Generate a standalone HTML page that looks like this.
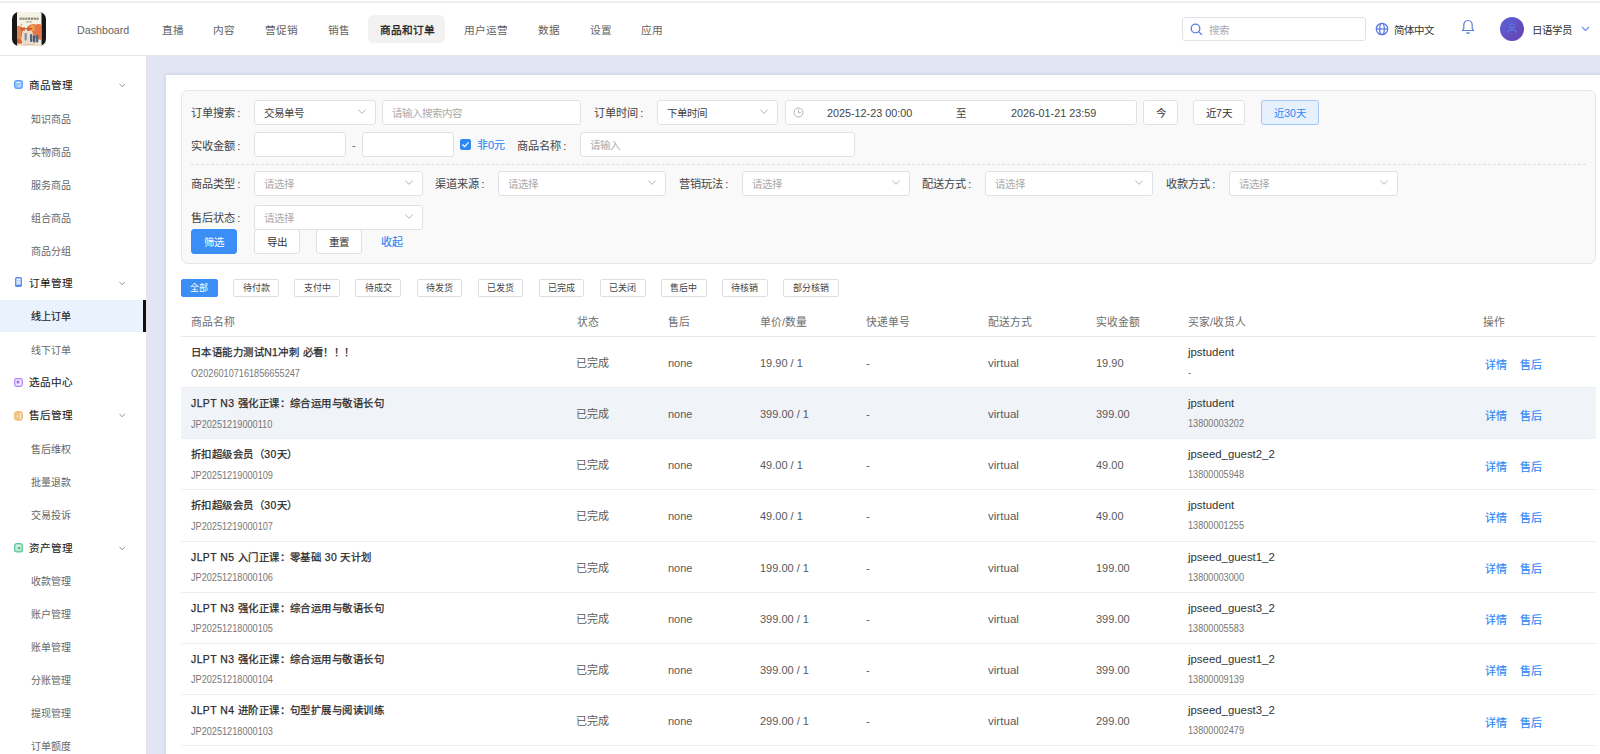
<!DOCTYPE html><html lang="zh-CN"><head><meta charset="utf-8"><style>
*{margin:0;padding:0;box-sizing:border-box}
html,body{width:1600px;height:754px;overflow:hidden;background:#fff;font-family:"Liberation Sans",sans-serif;color:#333}
.abs{position:absolute;white-space:nowrap}
.t{position:absolute;white-space:nowrap;line-height:1}
#hdr{position:absolute;left:0;top:0;width:1600px;height:56px;background:#fff;border-bottom:1px solid #e6e6e6}
#topline{position:absolute;left:0;top:1px;width:1600px;height:2px;background:#eeeeee}
.nav{position:absolute;top:23.8px;font-size:10.7px;color:#636363;line-height:12px}
#side{position:absolute;left:0;top:56px;width:147px;height:698px;background:#fff;border-right:1px solid #e4e4e8}
#main{position:absolute;left:147px;top:56px;width:1453px;height:698px;background:#e2e5f3}
#card{position:absolute;left:166px;top:75px;width:1440px;height:700px;background:#fff;box-shadow:0 0 4px rgba(120,125,160,.25)}
.gh{position:absolute;left:29px;font-size:10.6px;font-weight:500;color:#222;line-height:12px;-webkit-text-stroke:.12px #222}
.si{position:absolute;left:31px;font-size:10px;color:#666;line-height:12px}
.ico{position:absolute;left:14px;width:9px;height:9px;border-radius:2px}
.chev{position:absolute;left:119px;width:7px;height:7px}
#filter{position:absolute;left:181px;top:90px;width:1415px;height:174px;background:#f9f9f9;border:1px solid #e6e6e6;border-radius:7px}
.lbl{position:absolute;font-size:11.2px;color:#444;line-height:12px;margin-top:.7px}
.inp{position:absolute;height:25px;background:#fff;border:1px solid #dfe1e7;border-radius:3px}
.ph{position:absolute;font-size:10.5px;color:#aaa;line-height:12px;top:6px}
.val{position:absolute;font-size:10.5px;color:#444;line-height:12px;top:6px}
.btn{position:absolute;height:25px;padding-top:1px;background:#fff;border:1px solid #dfe1e7;border-radius:3px;font-size:10.5px;color:#333;text-align:center;line-height:23px}
.tab{position:absolute;top:278.7px;height:18px;background:#fff;border:1px solid #dcdee3;border-radius:2px;font-size:9px;color:#444;text-align:center;line-height:17px}
.th{position:absolute;top:315.8px;font-size:10.8px;color:#6e6e6e;line-height:12px;font-weight:500}
.row{position:absolute;left:181px;width:1415px;border-bottom:1px solid #eceef3}
.ttl{position:absolute;left:10px;font-size:10.4px;letter-spacing:.45px;font-weight:500;color:#2a2a2a;-webkit-text-stroke:.25px #2a2a2a;line-height:12px}
.ono{position:absolute;left:10px;font-size:10px;color:#777;line-height:12px;transform:scaleX(.915);transform-origin:0 0}
.cell{position:absolute;font-size:11px;color:#5a5a5a;line-height:12px}
.lnk{position:absolute;font-size:11px;color:#2f86f6;line-height:12px;font-weight:500;-webkit-text-stroke:.15px #2f86f6}
</style></head><body>
<div id="hdr"></div><div id="topline"></div>
<svg class="abs" style="left:12px;top:12px" width="34" height="34" viewBox="0 0 34 34">
<defs><clipPath id="lc"><rect x="0" y="0" width="34" height="34" rx="7"/></clipPath>
<linearGradient id="lg1" x1="0" y1="0" x2="0" y2="1"><stop offset="0" stop-color="#f4f3e6"/><stop offset="1" stop-color="#f1efe0"/></linearGradient></defs>
<g clip-path="url(#lc)">
<rect width="34" height="34" fill="#171717"/>
<rect x="5" y="0" width="24.5" height="34" fill="url(#lg1)"/>
<g fill="#6f6257" opacity=".75"><rect x="7.6" y="5.6" width="2.2" height="2.2"/><rect x="10.4" y="5.6" width="2.2" height="2.2"/><rect x="13.2" y="5.6" width="2.2" height="2.2"/><rect x="16" y="5.6" width="2.2" height="2.2"/><rect x="18.8" y="5.6" width="2.2" height="2.2"/><rect x="21.6" y="5.6" width="2.2" height="2.2"/><rect x="24.4" y="5.6" width="2.2" height="2.2"/></g>
<rect x="14.5" y="9.2" width="2" height="1.3" fill="#7d7065" opacity=".7"/><rect x="17.5" y="9.2" width="2" height="1.3" fill="#7d7065" opacity=".7"/>
<circle cx="9.5" cy="12.5" r=".8" fill="#e07050" opacity=".8"/>
<path d="M5 14.5 Q7 13 9 14.5 Q11 16 13 15 L13 34 L5 34 Z" fill="#e37a44" opacity=".9"/>
<path d="M15 15 Q19 11 24 12.5 Q27.5 11.5 29.5 13 L29.5 28 Q24 27 19 24 L15 20 Z" fill="#e36a3c" opacity=".92"/>
<path d="M18 13.5 Q21 12 23 14 L23 19 L18 19 Z" fill="#eea24e" opacity=".85"/>
<rect x="8" y="16.2" width="12" height="1.2" fill="#b9442c" opacity=".85"/>
<rect x="9.5" y="17.4" width="1.1" height="10" fill="#b9442c" opacity=".75"/>
<path d="M10.5 19 L20 19 L25 34 L8 34 Z" fill="#eadccb"/>
<rect x="12.5" y="21" width="2.4" height="7.5" rx="1" fill="#8a93a0"/>
<rect x="18" y="22" width="2.4" height="8" rx="1" fill="#56627a"/>
<rect x="21" y="23.5" width="2.4" height="7" rx="1" fill="#4e5a73"/>
<rect x="24" y="23" width="2.4" height="7.5" rx="1" fill="#56627c"/>
<path d="M5 27 Q8 26 10 29 L10 34 L5 34 Z" fill="#d8582f" opacity=".85"/>
<rect x="5" y="31.6" width="24.5" height="2.4" fill="#eee2cf"/>
<rect x="11" y="32.2" width="12" height=".8" fill="#c9a98a" opacity=".6"/>
</g></svg>
<div class="abs" style="left:368px;top:15px;width:77px;height:28px;background:#f2f2f2;border-radius:6px"></div>
<div class="nav" style="left:77px;">Dashboard</div>
<div class="nav" style="left:162px;">直播</div>
<div class="nav" style="left:213px;">内容</div>
<div class="nav" style="left:265px;">营促销</div>
<div class="nav" style="left:328px;">销售</div>
<div class="nav" style="left:380px;color:#222;font-weight:500;-webkit-text-stroke:.3px #222;">商品和订单</div>
<div class="nav" style="left:464px;">用户运营</div>
<div class="nav" style="left:538px;">数据</div>
<div class="nav" style="left:590px;">设置</div>
<div class="nav" style="left:641px;">应用</div>
<div class="abs" style="left:1182px;top:17px;width:184px;height:24px;border:1px solid #e0e2e9;border-radius:3px;background:#fff"></div>
<svg class="abs" style="left:1190px;top:23px" width="13" height="13" viewBox="0 0 13 13"><circle cx="5.5" cy="5.5" r="4.3" fill="none" stroke="#5d7de6" stroke-width="1.3"/><line x1="8.6" y1="8.6" x2="11.5" y2="11.5" stroke="#5d7de6" stroke-width="1.3" stroke-linecap="round"/></svg>
<div class="t" style="left:1209px;top:24.7px;font-size:10.5px;color:#aaa">搜索</div>
<svg class="abs" style="left:1374.5px;top:22px" width="14" height="14" viewBox="0 0 14 14"><g fill="none" stroke="#5a78e6" stroke-width="1.25"><circle cx="7" cy="7" r="5.7"/><ellipse cx="7" cy="7" rx="2.3" ry="5.7"/><line x1="1.3" y1="7" x2="12.7" y2="7"/></g></svg>
<div class="t" style="left:1393.5px;top:24.8px;font-size:10.5px;color:#333">简体中文</div>
<svg class="abs" style="left:1461px;top:19px" width="14" height="16" viewBox="0 0 14 16"><path d="M7 1.5 C4.2 1.5 2.8 3.6 2.8 6 L2.8 9.5 L1.5 11.5 L12.5 11.5 L11.2 9.5 L11.2 6 C11.2 3.6 9.8 1.5 7 1.5 Z" fill="none" stroke="#5b7fd8" stroke-width="1.2" stroke-linejoin="round"/><path d="M5.5 13.5 Q7 15 8.5 13.5" fill="none" stroke="#5b7fd8" stroke-width="1.2"/></svg>
<div class="abs" style="left:1500px;top:17px;width:24px;height:24px;border-radius:50%;background:linear-gradient(135deg,#5865d8,#6a3fae)"></div>
<svg class="abs" style="left:1505px;top:22px" width="14" height="14" viewBox="0 0 14 14"><g fill="none" stroke="#5d7ae8" stroke-width="1.1"><circle cx="7" cy="3.8" r="2.1"/><path d="M2.8 10.8 Q2.8 7.6 7 7.6 Q11.2 7.6 11.2 10.8"/></g></svg>
<div class="t" style="left:1531.5px;top:24.8px;font-size:10.5px;color:#333">日语学员</div>
<svg class="abs" style="left:1581px;top:26px" width="9" height="6" viewBox="0 0 9 6"><path d="M1 1 L4.5 4.5 L8 1" fill="none" stroke="#6b8cf0" stroke-width="1.2"/></svg>
<div id="side"></div><div id="main"></div><div id="card"></div>
<div class="abs" style="left:0;top:300px;width:143px;height:32px;background:#eaf2fd"></div>
<div class="abs" style="left:143px;top:300px;width:3px;height:32px;background:#111"></div>
<div class="abs" style="left:14px;top:80px;line-height:0"><svg width="9" height="9" viewBox="0 0 9 9"><rect x=".6" y=".6" width="7.8" height="7.8" rx="2.2" fill="#8fc0fa" stroke="#5ea2f6" stroke-width="1.1"/><rect x="2.2" y="2.1" width="4.6" height="1" fill="#e8f2fe"/><path d="M2.3 6.6 L6.6 6.6 L6.6 4.5 Z" fill="#e8f2fe" opacity=".85"/></svg></div>
<div class="gh" style="top:79px">商品管理</div>
<svg class="chev" style="top:81.7px" width="8" height="5" viewBox="0 0 8 5"><path d="M.5 .6 L3.6 4 L6.7 .6" fill="none" stroke="#8c8c8c" stroke-width="1.05"/></svg>
<div class="si" style="top:113.5px">知识商品</div>
<div class="si" style="top:146.5px">实物商品</div>
<div class="si" style="top:179.5px">服务商品</div>
<div class="si" style="top:212.5px">组合商品</div>
<div class="si" style="top:245.5px">商品分组</div>
<div class="abs" style="left:14.5px;top:277px;line-height:0"><svg width="7" height="10" viewBox="0 0 7 10"><rect x=".6" y=".6" width="5.8" height="8.6" rx="1.2" fill="#b9d0fb" stroke="#5688f1" stroke-width="1.1"/><rect x="1.8" y="2" width="3.4" height="1" fill="#f3f7fe"/><rect x="1.8" y="4.2" width="3.4" height="2.4" fill="#eef3fe" opacity=".8"/><rect x=".3" y="8" width="6.4" height="1.4" fill="#4d82f0"/></svg></div>
<div class="gh" style="top:277px">订单管理</div>
<svg class="chev" style="top:279.7px" width="8" height="5" viewBox="0 0 8 5"><path d="M.5 .6 L3.6 4 L6.7 .6" fill="none" stroke="#8c8c8c" stroke-width="1.05"/></svg>
<div class="si" style="top:311px;color:#222;font-weight:500;-webkit-text-stroke:.2px #222">线上订单</div>
<div class="si" style="top:344.5px">线下订单</div>
<div class="abs" style="left:14px;top:377.5px;line-height:0"><svg width="9" height="9" viewBox="0 0 9 9"><rect x=".7" y=".7" width="7.6" height="7.6" rx="1.8" fill="#f1e6fe" stroke="#b282f6" stroke-width="1.2"/><circle cx="4" cy="4.1" r="1.5" fill="#a06af5"/></svg></div>
<div class="gh" style="top:376px">选品中心</div>
<div class="abs" style="left:14px;top:410.5px;line-height:0"><svg width="9" height="10" viewBox="0 0 9 10"><rect x=".6" y=".6" width="7.8" height="8.6" rx="2.2" fill="#f2c585" stroke="#f0bb72" stroke-width="1"/><path d="M2 5 Q3.5 4 5 5 Q3.5 6 2 5 Z" fill="#fdf3e4"/><rect x="6" y="2.4" width="1" height="5.4" fill="#fdf3e4"/></svg></div>
<div class="gh" style="top:409px">售后管理</div>
<svg class="chev" style="top:411.7px" width="8" height="5" viewBox="0 0 8 5"><path d="M.5 .6 L3.6 4 L6.7 .6" fill="none" stroke="#8c8c8c" stroke-width="1.05"/></svg>
<div class="si" style="top:443.8px">售后维权</div>
<div class="si" style="top:476.8px">批量退款</div>
<div class="si" style="top:509.8px">交易投诉</div>
<div class="abs" style="left:14px;top:543px;line-height:0"><svg width="9" height="10" viewBox="0 0 9 10"><rect x=".7" y=".7" width="7.6" height="8.2" rx="2" fill="#bfead5" stroke="#59c79a" stroke-width="1.2"/><rect x="2" y="2.3" width="5" height=".9" fill="#e6f7ef"/><circle cx="5.2" cy="5.2" r="1.1" fill="#2fb57e"/></svg></div>
<div class="gh" style="top:542px">资产管理</div>
<svg class="chev" style="top:544.7px" width="8" height="5" viewBox="0 0 8 5"><path d="M.5 .6 L3.6 4 L6.7 .6" fill="none" stroke="#8c8c8c" stroke-width="1.05"/></svg>
<div class="si" style="top:575.8px">收款管理</div>
<div class="si" style="top:608.8px">账户管理</div>
<div class="si" style="top:641.8px">账单管理</div>
<div class="si" style="top:674.8px">分账管理</div>
<div class="si" style="top:707.8px">提现管理</div>
<div class="si" style="top:740.8px">订单额度</div>
<div id="filter"></div>
<div class="lbl" style="left:191px;top:106px">订单搜索<span style="margin-left:2.3px">:</span></div>
<div class="inp" style="left:254px;top:100px;width:122px"></div>
<div class="val" style="left:263.5px;top:107px;color:#444">交易单号</div>
<svg class="abs" style="left:357.5px;top:108.7px" width="8" height="5" viewBox="0 0 8 5"><path d="M.3 .5 L4 4.3 L7.7 .5" fill="none" stroke="#aaa" stroke-width=".9"/></svg>
<div class="inp" style="left:382px;top:100px;width:199px"></div>
<div class="ph" style="left:392px;top:107px">请输入搜索内容</div>
<div class="lbl" style="left:594px;top:106px">订单时间<span style="margin-left:2.3px">:</span></div>
<div class="inp" style="left:657px;top:100px;width:121px"></div>
<div class="val" style="left:666.5px;top:107px;color:#444">下单时间</div>
<svg class="abs" style="left:759.5px;top:108.7px" width="8" height="5" viewBox="0 0 8 5"><path d="M.3 .5 L4 4.3 L7.7 .5" fill="none" stroke="#aaa" stroke-width=".9"/></svg>
<div class="inp" style="left:785px;top:100px;width:352px"></div>
<svg class="abs" style="left:793px;top:107px" width="11" height="11" viewBox="0 0 11 11"><g fill="none" stroke="#aaa" stroke-width=".9"><circle cx="5.5" cy="5.5" r="4.5"/><path d="M5.5 2.8 V5.6 H7.8"/></g></svg>
<div class="val" style="left:827px;top:107px;font-size:10.8px">2025-12-23 00:00</div>
<div class="val" style="left:956px;top:107px">至</div>
<div class="val" style="left:1011px;top:107px;font-size:10.8px">2026-01-21 23:59</div>
<div class="btn" style="left:1143px;top:100px;width:35px">今</div>
<div class="btn" style="left:1193px;top:100px;width:52px">近7天</div>
<div class="btn" style="left:1261px;top:100px;width:58px;background:#e6f1fd;border-color:#9fc8f6;color:#2f86f6">近30天</div>
<div class="lbl" style="left:191px;top:139px">实收金额<span style="margin-left:2.3px">:</span></div>
<div class="inp" style="left:254px;top:132px;width:92px"></div>
<div class="t" style="left:352px;top:140px;font-size:11px;color:#666">-</div>
<div class="inp" style="left:362px;top:132px;width:92px"></div>
<div class="abs" style="left:460px;top:139px;width:11px;height:11px;background:#2f86f6;border-radius:2px"></div>
<svg class="abs" style="left:460px;top:139px" width="11" height="11" viewBox="0 0 11 11"><path d="M2.5 5.5 L4.6 7.6 L8.6 3.4" fill="none" stroke="#fff" stroke-width="1.3"/></svg>
<div class="t" style="left:477px;top:140px;font-size:11px;color:#2f86f6;font-weight:500;-webkit-text-stroke:.15px #2f86f6">非0元</div>
<div class="lbl" style="left:517px;top:139px">商品名称<span style="margin-left:2.3px">:</span></div>
<div class="inp" style="left:580px;top:132px;width:275px"></div>
<div class="ph" style="left:590px;top:139px">请输入</div>
<div class="abs" style="left:191px;top:164px;width:1395px;height:0;border-top:1px dashed #dedede"></div>
<div class="lbl" style="left:191px;top:177px">商品类型<span style="margin-left:2.3px">:</span></div>
<div class="inp" style="left:254px;top:171px;width:169px"></div>
<div class="ph" style="left:264px;top:178px">请选择</div>
<svg class="abs" style="left:404.5px;top:179.7px" width="8" height="5" viewBox="0 0 8 5"><path d="M.3 .5 L4 4.3 L7.7 .5" fill="none" stroke="#aaa" stroke-width=".9"/></svg>
<div class="lbl" style="left:435px;top:177px">渠道来源<span style="margin-left:2.3px">:</span></div>
<div class="inp" style="left:498px;top:171px;width:168px"></div>
<div class="ph" style="left:508px;top:178px">请选择</div>
<svg class="abs" style="left:647.5px;top:179.7px" width="8" height="5" viewBox="0 0 8 5"><path d="M.3 .5 L4 4.3 L7.7 .5" fill="none" stroke="#aaa" stroke-width=".9"/></svg>
<div class="lbl" style="left:679px;top:177px">营销玩法<span style="margin-left:2.3px">:</span></div>
<div class="inp" style="left:742px;top:171px;width:168px"></div>
<div class="ph" style="left:752px;top:178px">请选择</div>
<svg class="abs" style="left:891.5px;top:179.7px" width="8" height="5" viewBox="0 0 8 5"><path d="M.3 .5 L4 4.3 L7.7 .5" fill="none" stroke="#aaa" stroke-width=".9"/></svg>
<div class="lbl" style="left:922px;top:177px">配送方式<span style="margin-left:2.3px">:</span></div>
<div class="inp" style="left:985px;top:171px;width:168px"></div>
<div class="ph" style="left:995px;top:178px">请选择</div>
<svg class="abs" style="left:1134.5px;top:179.7px" width="8" height="5" viewBox="0 0 8 5"><path d="M.3 .5 L4 4.3 L7.7 .5" fill="none" stroke="#aaa" stroke-width=".9"/></svg>
<div class="lbl" style="left:1166px;top:177px">收款方式<span style="margin-left:2.3px">:</span></div>
<div class="inp" style="left:1229px;top:171px;width:169px"></div>
<div class="ph" style="left:1239px;top:178px">请选择</div>
<svg class="abs" style="left:1379.5px;top:179.7px" width="8" height="5" viewBox="0 0 8 5"><path d="M.3 .5 L4 4.3 L7.7 .5" fill="none" stroke="#aaa" stroke-width=".9"/></svg>
<div class="lbl" style="left:191px;top:211px">售后状态<span style="margin-left:2.3px">:</span></div>
<div class="inp" style="left:254px;top:205px;width:169px"></div>
<div class="ph" style="left:264px;top:212px">请选择</div>
<svg class="abs" style="left:404.5px;top:213.7px" width="8" height="5" viewBox="0 0 8 5"><path d="M.3 .5 L4 4.3 L7.7 .5" fill="none" stroke="#aaa" stroke-width=".9"/></svg>
<div class="btn" style="left:191px;top:229px;width:46px;background:#3a8ef6;border-color:#3a8ef6;color:#fff">筛选</div>
<div class="btn" style="left:254px;top:229px;width:46px">导出</div>
<div class="btn" style="left:316px;top:229px;width:46px">重置</div>
<div class="t" style="left:381px;top:237px;font-size:11px;color:#2f86f6;font-weight:500;-webkit-text-stroke:.15px #2f86f6">收起</div>
<div class="tab" style="left:181px;width:36.7px;background:#3a8ef6;border-color:#3a8ef6;color:#fff;">全部</div>
<div class="tab" style="left:233.2px;width:45.8px;">待付款</div>
<div class="tab" style="left:294.3px;width:45.8px;">支付中</div>
<div class="tab" style="left:355.4px;width:45.8px;">待成交</div>
<div class="tab" style="left:416.5px;width:45.8px;">待发货</div>
<div class="tab" style="left:477.6px;width:45.8px;">已发货</div>
<div class="tab" style="left:538.7px;width:45.8px;">已完成</div>
<div class="tab" style="left:599.8px;width:45.8px;">已关闭</div>
<div class="tab" style="left:660.9px;width:45.8px;">售后中</div>
<div class="tab" style="left:722.0px;width:45.8px;">待核销</div>
<div class="tab" style="left:783.1px;width:55.5px;">部分核销</div>
<div class="abs" style="left:181px;top:336px;width:1415px;height:1px;background:#e6e8ee"></div>
<div class="th" style="left:191px">商品名称</div>
<div class="th" style="left:577px">状态</div>
<div class="th" style="left:668px">售后</div>
<div class="th" style="left:760px">单价/数量</div>
<div class="th" style="left:866px">快递单号</div>
<div class="th" style="left:988px">配送方式</div>
<div class="th" style="left:1096px">实收金额</div>
<div class="th" style="left:1188px">买家/收货人</div>
<div class="th" style="left:1483px">操作</div>
<div class="row" style="top:337.0px;height:51.15px;">
<div class="ttl" style="top:10px">日本语能力测试N1冲刺 必看！！！</div>
<div class="ono" style="top:30.5px">O20260107161856655247</div>
<div class="cell" style="left:395px;top:20px">已完成</div>
<div class="cell" style="left:487px;top:20px">none</div>
<div class="cell" style="left:579px;top:20px">19.90 / 1</div>
<div class="cell" style="left:685px;top:20px">-</div>
<div class="cell" style="left:807px;top:20px;font-size:11.6px">virtual</div>
<div class="cell" style="left:915px;top:20px">19.90</div>
<div class="cell" style="left:1007px;top:9px;font-size:11.4px;color:#333">jpstudent</div>
<div class="ono" style="left:1007px;top:30px">-</div>
<div class="lnk" style="left:1304px;top:21.5px">详情</div>
<div class="lnk" style="left:1339px;top:21.5px">售后</div>
</div>
<div class="row" style="top:388.1px;height:51.15px;background:#f0f3f7;">
<div class="ttl" style="top:10px">JLPT N3 强化正课：综合运用与敬语长句</div>
<div class="ono" style="top:30.5px">JP20251219000110</div>
<div class="cell" style="left:395px;top:20px">已完成</div>
<div class="cell" style="left:487px;top:20px">none</div>
<div class="cell" style="left:579px;top:20px">399.00 / 1</div>
<div class="cell" style="left:685px;top:20px">-</div>
<div class="cell" style="left:807px;top:20px;font-size:11.6px">virtual</div>
<div class="cell" style="left:915px;top:20px">399.00</div>
<div class="cell" style="left:1007px;top:9px;font-size:11.4px;color:#333">jpstudent</div>
<div class="ono" style="left:1007px;top:30px">13800003202</div>
<div class="lnk" style="left:1304px;top:21.5px">详情</div>
<div class="lnk" style="left:1339px;top:21.5px">售后</div>
</div>
<div class="row" style="top:439.3px;height:51.15px;">
<div class="ttl" style="top:10px">折扣超级会员（30天）</div>
<div class="ono" style="top:30.5px">JP20251219000109</div>
<div class="cell" style="left:395px;top:20px">已完成</div>
<div class="cell" style="left:487px;top:20px">none</div>
<div class="cell" style="left:579px;top:20px">49.00 / 1</div>
<div class="cell" style="left:685px;top:20px">-</div>
<div class="cell" style="left:807px;top:20px;font-size:11.6px">virtual</div>
<div class="cell" style="left:915px;top:20px">49.00</div>
<div class="cell" style="left:1007px;top:9px;font-size:11.4px;color:#333">jpseed_guest2_2</div>
<div class="ono" style="left:1007px;top:30px">13800005948</div>
<div class="lnk" style="left:1304px;top:21.5px">详情</div>
<div class="lnk" style="left:1339px;top:21.5px">售后</div>
</div>
<div class="row" style="top:490.4px;height:51.15px;">
<div class="ttl" style="top:10px">折扣超级会员（30天）</div>
<div class="ono" style="top:30.5px">JP20251219000107</div>
<div class="cell" style="left:395px;top:20px">已完成</div>
<div class="cell" style="left:487px;top:20px">none</div>
<div class="cell" style="left:579px;top:20px">49.00 / 1</div>
<div class="cell" style="left:685px;top:20px">-</div>
<div class="cell" style="left:807px;top:20px;font-size:11.6px">virtual</div>
<div class="cell" style="left:915px;top:20px">49.00</div>
<div class="cell" style="left:1007px;top:9px;font-size:11.4px;color:#333">jpstudent</div>
<div class="ono" style="left:1007px;top:30px">13800001255</div>
<div class="lnk" style="left:1304px;top:21.5px">详情</div>
<div class="lnk" style="left:1339px;top:21.5px">售后</div>
</div>
<div class="row" style="top:541.6px;height:51.15px;">
<div class="ttl" style="top:10px">JLPT N5 入门正课：零基础 30 天计划</div>
<div class="ono" style="top:30.5px">JP20251218000106</div>
<div class="cell" style="left:395px;top:20px">已完成</div>
<div class="cell" style="left:487px;top:20px">none</div>
<div class="cell" style="left:579px;top:20px">199.00 / 1</div>
<div class="cell" style="left:685px;top:20px">-</div>
<div class="cell" style="left:807px;top:20px;font-size:11.6px">virtual</div>
<div class="cell" style="left:915px;top:20px">199.00</div>
<div class="cell" style="left:1007px;top:9px;font-size:11.4px;color:#333">jpseed_guest1_2</div>
<div class="ono" style="left:1007px;top:30px">13800003000</div>
<div class="lnk" style="left:1304px;top:21.5px">详情</div>
<div class="lnk" style="left:1339px;top:21.5px">售后</div>
</div>
<div class="row" style="top:592.7px;height:51.15px;">
<div class="ttl" style="top:10px">JLPT N3 强化正课：综合运用与敬语长句</div>
<div class="ono" style="top:30.5px">JP20251218000105</div>
<div class="cell" style="left:395px;top:20px">已完成</div>
<div class="cell" style="left:487px;top:20px">none</div>
<div class="cell" style="left:579px;top:20px">399.00 / 1</div>
<div class="cell" style="left:685px;top:20px">-</div>
<div class="cell" style="left:807px;top:20px;font-size:11.6px">virtual</div>
<div class="cell" style="left:915px;top:20px">399.00</div>
<div class="cell" style="left:1007px;top:9px;font-size:11.4px;color:#333">jpseed_guest3_2</div>
<div class="ono" style="left:1007px;top:30px">13800005583</div>
<div class="lnk" style="left:1304px;top:21.5px">详情</div>
<div class="lnk" style="left:1339px;top:21.5px">售后</div>
</div>
<div class="row" style="top:643.9px;height:51.15px;">
<div class="ttl" style="top:10px">JLPT N3 强化正课：综合运用与敬语长句</div>
<div class="ono" style="top:30.5px">JP20251218000104</div>
<div class="cell" style="left:395px;top:20px">已完成</div>
<div class="cell" style="left:487px;top:20px">none</div>
<div class="cell" style="left:579px;top:20px">399.00 / 1</div>
<div class="cell" style="left:685px;top:20px">-</div>
<div class="cell" style="left:807px;top:20px;font-size:11.6px">virtual</div>
<div class="cell" style="left:915px;top:20px">399.00</div>
<div class="cell" style="left:1007px;top:9px;font-size:11.4px;color:#333">jpseed_guest1_2</div>
<div class="ono" style="left:1007px;top:30px">13800009139</div>
<div class="lnk" style="left:1304px;top:21.5px">详情</div>
<div class="lnk" style="left:1339px;top:21.5px">售后</div>
</div>
<div class="row" style="top:695.0px;height:51.15px;">
<div class="ttl" style="top:10px">JLPT N4 进阶正课：句型扩展与阅读训练</div>
<div class="ono" style="top:30.5px">JP20251218000103</div>
<div class="cell" style="left:395px;top:20px">已完成</div>
<div class="cell" style="left:487px;top:20px">none</div>
<div class="cell" style="left:579px;top:20px">299.00 / 1</div>
<div class="cell" style="left:685px;top:20px">-</div>
<div class="cell" style="left:807px;top:20px;font-size:11.6px">virtual</div>
<div class="cell" style="left:915px;top:20px">299.00</div>
<div class="cell" style="left:1007px;top:9px;font-size:11.4px;color:#333">jpseed_guest3_2</div>
<div class="ono" style="left:1007px;top:30px">13800002479</div>
<div class="lnk" style="left:1304px;top:21.5px">详情</div>
<div class="lnk" style="left:1339px;top:21.5px">售后</div>
</div>
</body></html>
